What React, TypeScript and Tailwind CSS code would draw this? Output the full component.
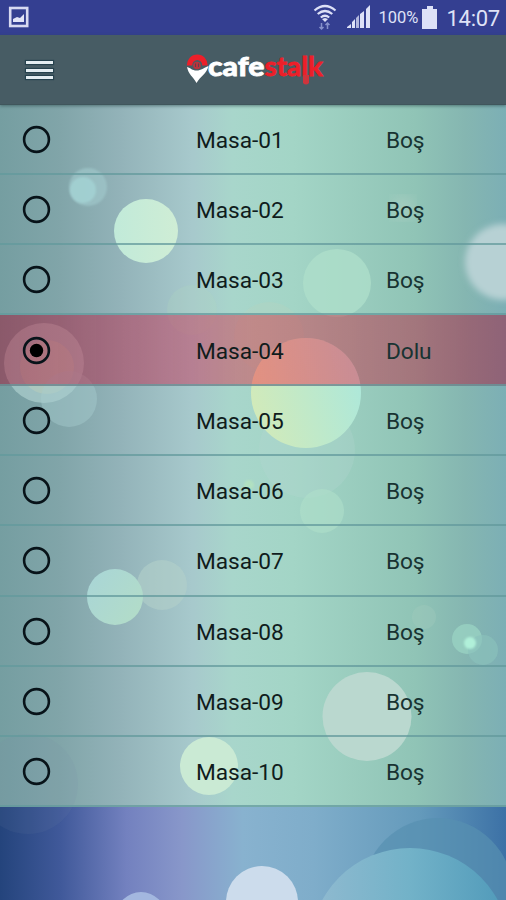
import React from "react";

const tables = [
  { name: "Masa-01", status: "Boş", occupied: false },
  { name: "Masa-02", status: "Boş", occupied: false },
  { name: "Masa-03", status: "Boş", occupied: false },
  { name: "Masa-04", status: "Dolu", occupied: true },
  { name: "Masa-05", status: "Boş", occupied: false },
  { name: "Masa-06", status: "Boş", occupied: false },
  { name: "Masa-07", status: "Boş", occupied: false },
  { name: "Masa-08", status: "Boş", occupied: false },
  { name: "Masa-09", status: "Boş", occupied: false },
  { name: "Masa-10", status: "Boş", occupied: false },
];

// Soft light spots of the wallpaper
function Bokeh() {
  return (
    <svg className="absolute inset-0" width="506" height="900" viewBox="0 0 506 900" aria-hidden="true">
      <defs>
        <linearGradient id="list" x1="0" x2="1" y1="0" y2="0">
          <stop offset="0" stopColor="#759ea1" />
          <stop offset=".12" stopColor="#81a5a9" />
          <stop offset=".24" stopColor="#93b3b9" />
          <stop offset=".38" stopColor="#a7c9cc" />
          <stop offset=".46" stopColor="#a8d6cb" />
          <stop offset=".58" stopColor="#a3d5c6" />
          <stop offset=".82" stopColor="#90c4b6" />
          <stop offset=".92" stopColor="#85b6b1" />
          <stop offset="1" stopColor="#7cafb5" />
        </linearGradient>
        <linearGradient id="foot" x1="0" x2="1" y1="0" y2="0">
          <stop offset="0" stopColor="#24447c" />
          <stop offset=".12" stopColor="#40599a" />
          <stop offset=".25" stopColor="#7381bf" />
          <stop offset=".36" stopColor="#8897ca" />
          <stop offset=".48" stopColor="#88b2cf" />
          <stop offset=".62" stopColor="#7fadca" />
          <stop offset=".83" stopColor="#649abb" />
          <stop offset="1" stopColor="#3c71a6" />
        </linearGradient>
        <linearGradient id="warm" x1="0" x2="1" y1=".65" y2=".35">
          <stop offset="0" stopColor="#d2eab9" />
          <stop offset="1" stopColor="#ade8da" />
        </linearGradient>
        <linearGradient id="mint" x1="0" x2="1">
          <stop offset="0" stopColor="#c1ead9" />
          <stop offset="1" stopColor="#cfedd5" />
        </linearGradient>
        <linearGradient id="pale" x1="0" x2="1" y1="0" y2=".7">
          <stop offset="0" stopColor="#a8d5d7" />
          <stop offset="1" stopColor="#b2dcc9" />
        </linearGradient>
        <linearGradient id="sea" x1="0" x2="1">
          <stop offset="0" stopColor="#91bad0" />
          <stop offset=".5" stopColor="#72b2c8" />
          <stop offset="1" stopColor="#4f99b9" />
        </linearGradient>
        <linearGradient id="peach" x1="0" x2="1" y1=".6" y2=".3">
          <stop offset="0" stopColor="#ffdcb0" />
          <stop offset="1" stopColor="#dfe6e4" />
        </linearGradient>
        <filter id="b1"><feGaussianBlur stdDeviation="1.2" /></filter>
        <filter id="b3"><feGaussianBlur stdDeviation="3" /></filter>
        <filter id="b6"><feGaussianBlur stdDeviation="7" /></filter>
      </defs>
      <rect y="104" width="506" height="704" fill="url(#list)" />
      <rect y="807" width="506" height="93" fill="url(#foot)" />

      <circle cx="88" cy="187" r="19" fill="#a1c9cc" opacity=".65" filter="url(#b1)" />
      <circle cx="83" cy="190" r="13" fill="#a5d5d6" opacity=".75" filter="url(#b1)" />
      <circle cx="146" cy="231" r="32" fill="url(#mint)" />
      <circle cx="337" cy="283" r="34" fill="#aedfca" opacity=".78" />
      <circle cx="403" cy="208" r="11" fill="#b4d2c6" opacity=".6" filter="url(#b6)" />
      <circle cx="503" cy="262" r="38" fill="#b7d1d4" filter="url(#b3)" />
      <circle cx="192" cy="310" r="25" fill="#b1d7c1" opacity=".25" />
      <circle cx="44" cy="363" r="40" fill="#b0d2d1" opacity=".65" />
      <circle cx="47" cy="367" r="27" fill="#d8dcb2" opacity=".25" />
      <circle cx="69" cy="399" r="28" fill="#a7cccf" opacity=".45" />
      <circle cx="269" cy="337" r="35" fill="#c5d1b8" opacity=".2" />
      <circle cx="307" cy="450" r="48" fill="#b8d9d4" opacity=".25" />
      <circle cx="306" cy="393" r="55" fill="url(#warm)" />
      <circle cx="322" cy="511" r="22" fill="#afdfca" opacity=".6" />
      <circle cx="249" cy="485" r="5" fill="#b8e7bb" opacity=".6" filter="url(#b1)" />
      <circle cx="162" cy="585" r="25" fill="#b3d1ca" opacity=".58" />
      <circle cx="115" cy="597" r="28" fill="url(#pale)" />
      <circle cx="424" cy="617" r="12" fill="#a2ccbc" opacity=".35" />
      <circle cx="467" cy="639" r="15" fill="#9bd5c5" opacity=".7" />
      <circle cx="483" cy="650" r="15" fill="#8bc2bb" opacity=".65" />
      <circle cx="470" cy="643" r="6" fill="#b0f0d9" filter="url(#b1)" />
      <circle cx="367" cy="716.5" r="44.5" fill="#bad8cf" />
      <circle cx="209" cy="766" r="29" fill="#caead4" />
      <circle cx="28" cy="784" r="50" fill="#7489aa" opacity=".1" />
      <circle cx="141" cy="917" r="25" fill="#a3b7df" />
      <circle cx="262" cy="902" r="36" fill="#ccdcec" />
      <circle cx="438" cy="893" r="75" fill="#5790b0" opacity=".7" />
      <circle cx="410" cy="948" r="100" fill="url(#sea)" />

      <clipPath id="occupied"><rect y="315" width="506" height="70" /></clipPath>
      <g clipPath="url(#occupied)">
        <circle cx="306" cy="393" r="55" fill="url(#peach)" opacity=".6" />
      </g>
    </svg>
  );
}

function Logo() {
  return (
    <svg width="144" height="46" viewBox="184 44 144 46" aria-label="cafestalk">
      <path d="M189.500 65.500a7.500 8 0 0 1 15.500 0" fill="none" stroke="#ed1f29" strokeWidth="5.500" />
      <path d="M187 67c4 1 5 3.500 9.500 3.500 5 0 7-2.500 12-4.500-2 8-7.500 9.500-12 17-4-7-8-8.500-9.500-16z" fill="#fff" />
      <circle cx="197" cy="65.500" r="3.800" fill="#b9343d" />
      <path d="M195.500 63.500v3.500m3-3.500v3.500" stroke="#643f49" strokeWidth="1" />
      <text
        x="208" y="75.500" fill="#fff" stroke="#fff" strokeWidth=".8"
        fontFamily="Lato, sans-serif" fontSize="27" fontWeight="900"
        textLength="56.500" lengthAdjust="spacingAndGlyphs"
      >cafe</text>
      <text
        x="264.500" y="75.500" fill="#ed1f29" stroke="#ed1f29" strokeWidth=".8"
        fontFamily="Lato, sans-serif" fontSize="27" fontWeight="700"
        textLength="58.500" lengthAdjust="spacingAndGlyphs"
      >stalk</text>
      <path d="M303 75h6v8q-3 3-6 0z" fill="#ce343c" />
    </svg>
  );
}

function Radio({ checked }: { checked: boolean }) {
  return (
    <svg className="ml-[22px] mt-[1px]" width="29" height="29" viewBox="0 0 29 29" role="radio" aria-checked={checked}>
      <circle cx="14.500" cy="14.500" r="12.400" fill="none" stroke="#081319" strokeWidth="2.600" />
      {checked && <circle cx="14.500" cy="14.500" r="6.700" fill="#000" />}
    </svg>
  );
}

function StatusBar() {
  return (
    <div className="flex h-[34.500px] items-center bg-[#343f91] pl-2 text-[#dfe2f7]">
      <svg width="21" height="23" viewBox="0 0 21 23" className="shrink-0">
        <rect x="2.200" y="2" width="17" height="18" fill="none" stroke="#d8daf1" strokeWidth="2.600" />
        <path d="M5 16v-3l4-2 3 1 4-4v8z" fill="#e1e4f7" />
      </svg>
      <div className="grow" />
      <svg className="-ml-[4px] mr-[4px]" width="24" height="27" viewBox="0 0 24 27" fill="none" stroke="#dde1f7" strokeWidth="2.200">
        <path d="M1.500 6.500q10.500-9 21 0M4.700 10q7.300-6 14.600 0M7.800 13.500q4.200-3.500 8.400 0" />
        <path d="m9 15 3 3 3-3-3-1z" fill="#dde1f7" stroke="none" />
        <path d="M8.500 19v6m-2-2 2 2 2-2m4 2v-6m-2 2 2-2 2 2" stroke="#8590cb" strokeWidth="1.500" />
      </svg>
      <svg className="-ml-[3px] mr-[3px]" width="34" height="24" viewBox="-10 0 34 24" fill="#dde1f7">
        <path d="M-1 23v-1l4-3v4zm5 0v-6l3-3v9z" />
        <path d="M8 23V13l3-3v13z" opacity=".75" />
        <path d="M12 23V9l4-3v17zm6 0V4l4-4v23z" />
      </svg>
      <span className="ml-[4px] w-[41px] whitespace-nowrap pt-[2px] text-[16.500px]">100%</span>
      <svg className="ml-[2px] mr-[1px]" width="15" height="24" viewBox="0 0 15 24" fill="#dde1f7">
        <path d="M5 1h6v3h4v20H0V4h5z" />
      </svg>
      <span className="ml-[9px] mr-[6.500px] w-[53px] whitespace-nowrap pt-[2px] text-[22px] tracking-[-0.300px]">14:07</span>
    </div>
  );
}

export default function App() {
  return (
    <main className="relative h-[900px] w-[506px] overflow-hidden font-['Roboto',sans-serif]">
      <Bokeh />
      <div className="relative flex h-full flex-col">
        <StatusBar />
        <header className="flex h-[70px] shrink-0 items-start border-b border-[#40565c] bg-[#475c64] shadow-[0_1px_3px_rgba(45,75,78,0.6)]">
          <button aria-label="Menu" className="ml-[26px] mt-[25.500px] flex h-[20px] w-[28px] flex-col justify-between py-[1px]">
            <span className="h-[3px] w-[27px] bg-[#e4edf1] shadow-[0_0_1px_1px_#26424e]" />
            <span className="h-[3px] w-[27px] bg-[#e4edf1] shadow-[0_0_1px_1px_#26424e]" />
            <span className="h-[3px] w-[27px] bg-[#e4edf1] shadow-[0_0_1px_1px_#26424e]" />
          </button>
          <div className="ml-[130px] mt-[9.500px]"><Logo /></div>
        </header>
        <ul>
          {tables.map((table) => (
            <li
              key={table.name}
              className={`grid h-[70.300px] grid-cols-[196px_190px_120px] items-center border-b-2 border-[#63999c]/75 ${
                table.occupied
                  ? "bg-[linear-gradient(90deg,#a5052873,#c82d5278_38%,#d92e3f73_50%,#bb193873_80%,#a5052c73)]"
                  : ""
              }`}
            >
              <Radio checked={table.occupied} />
              <span className="pt-[4px] text-[22.700px] leading-7 tracking-[-0.050px] text-[#101c1c]">{table.name}</span>
              <span className="pt-[4px] text-[22.700px] leading-7 tracking-[-0.100px] text-[#183332]">{table.status}</span>
            </li>
          ))}
        </ul>
      </div>
    </main>
  );
}
